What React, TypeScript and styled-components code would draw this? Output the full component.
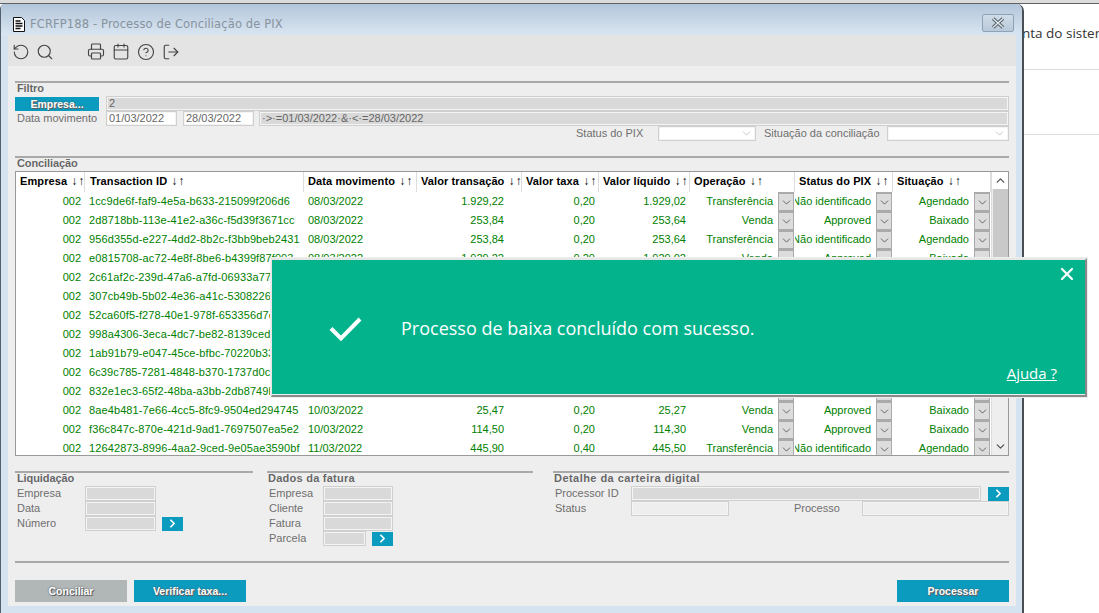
import React from "react";
import styled, { createGlobalStyle } from "styled-components";
import { RotateCcw, Search, Printer, Calendar, CircleHelp, LogOut, ChevronDown, ChevronUp, ChevronRight, X } from "lucide-react";

const Global = createGlobalStyle`
  html, body { margin: 0; padding: 0; background: #fff; }
  body { font-family: "Liberation Sans", Arial, sans-serif; font-size: 11px; overflow: hidden; }
  * { box-sizing: border-box; }
`;

const Page = styled.div`
  position: relative; width: 1099px; height: 613px; overflow: hidden; background: #fff;
  display: flex; flex-direction: column;
`;
const TopStrip = styled.div`height: 4px; background: #dcdcdc; border-bottom: 1px solid #5f6368; flex: none;`;
const Desk = styled.div`flex: 1; display: flex; min-height: 0;`;
const Win = styled.div`
  width: 1024px; flex: none; display: flex; flex-direction: column;
  border-left: 1px solid #55606c; border-right: 2px solid #4a4f55; border-top-right-radius: 7px; border-top-left-radius: 5px;
  background: #d5e3f1; padding: 0 6px 7px 7px;
`;
const TitleBar = styled.div`
  height: 31px; flex: none; margin: 0 -6px 0 -7px; padding: 9px 8px 0 11px; display: flex; align-items: center; gap: 4px;
  background: linear-gradient(#b3c6da, #d9e5f1); border-top-right-radius: 6px; border-top-left-radius: 4px;
`;
const TitleText = styled.span`font-family: "DejaVu Sans", sans-serif; font-size: 11.5px; color: #87939e; letter-spacing: .13px; flex: 1;`;
const CloseBtn = styled.div`
  width: 32px; height: 18px; margin-top: -2px; border: 1px solid #8fa3b8; border-radius: 2px; background: linear-gradient(#d0dce8,#b9c9d9);
  display: flex; align-items: center; justify-content: center;
`;
const Client = styled.div`flex: 1; display: flex; flex-direction: column; min-height: 0; background: #eeeeee;`;
const Toolbar = styled.div`height: 31px; flex: none; background: #e4e4e4; display: flex; align-items: center; padding: 2px 0 0 4px; color: #444;`;
const ToolIcon = styled.span<{ $gap?: number }>`display: flex; width: 18px; margin-right: ${p => p.$gap ?? 7}px; justify-content: center;`;
const Body = styled.div`flex: 1; padding: 15px 7px 0 7px; display: flex; flex-direction: column;`;

const SecTitle = styled.div<{ $ls?: number; $pl?: number }>`
  border-top: 2px solid #a9a9a9; height: 15px; padding: 0 0 0 ${p => p.$pl ?? 2}px; font-weight: bold; font-size: 11px; line-height: 11px; color: #666;
  text-shadow: 0 0 1px #fff; white-space: nowrap; letter-spacing: ${p => p.$ls ?? -0.1}px;
`;
const Row = styled.div`height: 15px; display: flex; align-items: center; flex: none;`;
const Label = styled.span<{ $w?: number; $ml?: number }>`
  color: #6e6e6e; font-size: 11px; line-height: 13px; white-space: nowrap; padding: 0 0 1px 2px; flex: none;
  width: ${p => (p.$w ? p.$w + "px" : "auto")}; margin-left: ${p => p.$ml ?? 0}px;
`;
const Field = styled.div<{ $w?: number; $ml?: number; $white?: boolean; $plain?: boolean }>`
  height: 15px; flex: ${p => (p.$w ? "none" : "1")}; width: ${p => (p.$w ? p.$w + "px" : "auto")}; margin-left: ${p => p.$ml ?? 0}px;
  border: 1px solid #cfcfcf; outline: 1px solid #f4f4f4; outline-offset: -2px;
  background: ${p => (p.$white ? "#fff" : p.$plain ? "#eeeeee" : "#d9d9d9")};
  color: #666; font-size: 11px; line-height: 13px; padding: 0 2px; white-space: nowrap; overflow: hidden;
  display: flex; align-items: center; justify-content: space-between;
`;
const ActionBtn = styled.button<{ $w: number; $grey?: boolean; $h?: number }>`
  width: ${p => p.$w}px; height: ${p => p.$h ?? 22}px; flex: none; border: 0; padding: 0; margin: 0;
  background: ${p => (p.$grey ? "#b1b6b6" : "#0b9bbf")}; color: #fff; font-family: inherit; font-size: 10.5px; font-weight: bold;
  text-shadow: 0 0 2px #555, 1px 1px 0 #666; text-align: center;
`;
const GoBtn = styled.div<{ $ml: number }>`
  width: 21px; height: 14px; margin-left: ${p => p.$ml}px; background: #0b9bbf; color: #fff; flex: none;
  display: flex; align-items: center; justify-content: center;
`;

const Spacer = styled.div<{ $h: number }>`height: ${p => p.$h}px; flex: none;`;

const Table = styled.div`height: 285px; flex: none; border: 1px solid #999; background: #fff; display: flex; overflow: hidden;`;
const TableMain = styled.div`flex: 1; min-width: 0;`;
const cols = "69px 219px 113px 105px 77px 91px 105px 98px 98px";
const HeadRow = styled.div`display: grid; grid-template-columns: ${cols}; height: 20px;`;
const HeadCell = styled.div<{ $pl?: number }>`
  font-weight: bold; color: #000; font-size: 11px; line-height: 19px; padding-left: ${p => p.$pl ?? 3}px; white-space: nowrap;
  border-right: 1px solid #ddd; overflow: hidden; letter-spacing: .1px;
`;
const Arrows = styled.span`font-size: 12px; letter-spacing: 1px; margin-left: 1px;`;
const DataRow = styled.div`display: grid; grid-template-columns: ${cols}; height: 19px;`;
const Cell = styled.div<{ $right?: number; $left?: number; $id?: boolean }>`
  color: #008000; font-size: 11px; line-height: 19px; white-space: nowrap; overflow: hidden;
  text-align: ${p => (p.$left !== undefined ? "left" : "right")};
  padding-left: ${p => p.$left ?? 0}px; padding-right: ${p => p.$right ?? 4}px;
  letter-spacing: ${p => (p.$id ? ".11px" : "0")};
`;
const SelCell = styled.div`display: flex; justify-content: flex-end; align-items: center; color: #008000; font-size: 11px; line-height: 19px; white-space: nowrap; padding-right: 1px; overflow: hidden;`;
const SelBtn = styled.span`
  width: 16px; height: 19px; flex: none; margin-left: 5px; background: #dcdcdc; border: 1px solid #aaa; border-top: 2px solid #aaa;
  display: flex; align-items: center; justify-content: center; color: #555;
`;
const Scroll = styled.div`width: 17px; flex: none; background: #eeeeee; display: flex; flex-direction: column; align-items: center; color: #555; border-left: 1px solid #ddd;`;
const ScrollEnd = styled.div`height: 17px; width: 100%; background: #fff; display: flex; align-items: center; justify-content: center; flex: none;`;
const ScrollEndLow = styled(ScrollEnd)`background: #eeeeee; margin-top: auto;`;
const Thumb = styled.div`height: 150px; width: 15px; background: #c9c9c9; flex: none;`;

const Lower = styled.div`display: grid; grid-template-columns: 238px 266px 462px; column-gap: 14px; flex: none;`;
const LowerThird = styled.div`padding-left: 6px;`;
const Rule = styled.div`border-top: 2px solid #a9a9a9; flex: none;`;
const Footer = styled.div`display: flex; gap: 7px; flex: none;`;
const Push = styled.div`flex: 1;`;

const Side = styled.div`flex: 1; min-width: 0; display: flex; flex-direction: column; overflow: hidden;`;
const SideTop = styled.div`height: 66px; flex: none; padding-top: 20px; border-bottom: 1px solid #dcdcdc; font-family: "Open Sans", sans-serif; font-size: 13.5px; color: #333; white-space: nowrap; margin-left: -2px;`;
const SideMid = styled.div`height: 65px; flex: none; border-bottom: 1px solid #dcdcdc;`;

const Toast = styled.div`
  position: absolute; left: 271px; top: 258px; width: 816px; height: 139px; background: #03b38c;
  border: 2px solid #e6e6e6; border-left-width: 1px; border-bottom: 2px solid #8a8a8a; border-right: 2px solid #8a8a8a; outline: 1px solid #eee; outline-offset: 0;
  box-shadow: inset 0 -1px 0 #eee; color: #fff;
`;
const ToastInner = styled.div`display: flex; align-items: center; height: 100%; padding: 0 0 0 56px;`;
const ToastMsg = styled.div`font-family: "Open Sans", sans-serif; font-size: 18px; margin-left: 37px;`;
const ToastClose = styled.div`position: absolute; right: 8px; top: 4px; display: flex;`;
const ToastHelp = styled.a`position: absolute; right: 28px; bottom: 12px; font-family: "Open Sans", sans-serif; font-size: 15px; color: #fff; text-decoration: underline;`;

type R = [string, string, string, string, string, number];
const rows: R[] = [
  ["1cc9de6f-faf9-4e5a-b633-215099f206d6", "08/03/2022", "1.929,22", "0,20", "1.929,02", 0],
  ["2d8718bb-113e-41e2-a36c-f5d39f3671cc", "08/03/2022", "253,84", "0,20", "253,64", 1],
  ["956d355d-e227-4dd2-8b2c-f3bb9beb2431", "08/03/2022", "253,84", "0,20", "253,64", 0],
  ["e0815708-ac72-4e8f-8be6-b4399f87f003", "08/03/2022", "1.929,22", "0,20", "1.929,02", 1],
  ["2c61af2c-239d-47a6-a7fd-06933a77b1e4", "08/03/2022", "253,84", "0,20", "253,64", 1],
  ["307cb49b-5b02-4e36-a41c-53082260c7a1", "09/03/2022", "253,84", "0,20", "253,64", 1],
  ["52ca60f5-f278-40e1-978f-653356d7e0b2", "09/03/2022", "253,84", "0,20", "253,64", 1],
  ["998a4306-3eca-4dc7-be82-8139ced8a6f3", "09/03/2022", "25,47", "0,20", "25,27", 1],
  ["1ab91b79-e047-45ce-bfbc-70220b33d9c5", "09/03/2022", "25,47", "0,20", "25,27", 1],
  ["6c39c785-7281-4848-b370-1737d0c1e2f4", "10/03/2022", "25,47", "0,20", "25,27", 1],
  ["832e1ec3-65f2-48ba-a3bb-2db8749b5a06", "10/03/2022", "25,47", "0,20", "25,27", 1],
  ["8ae4b481-7e66-4cc5-8fc9-9504ed294745", "10/03/2022", "25,47", "0,20", "25,27", 1],
  ["f36c847c-870e-421d-9ad1-7697507ea5e2", "10/03/2022", "114,50", "0,20", "114,30", 1],
  ["12642873-8996-4aa2-9ced-9e05ae3590bf", "11/03/2022", "445,90", "0,40", "445,50", 0],
];

const Sel = ({ t }: { t: string }) => (
  <SelCell>
    {t}
    <SelBtn><ChevronDown size={13} strokeWidth={1.6} /></SelBtn>
  </SelCell>
);

const Go = ({ ml }: { ml: number }) => (
  <GoBtn $ml={ml}><ChevronRight size={13} strokeWidth={3.2} /></GoBtn>
);

const DocIcon = () => (
  <svg width="14" height="17" viewBox="0 0 14 17">
    <path d="M1.5 1.5h8l3 3v11h-11z" fill="#fff" stroke="#111" />
    <path d="M3.5 5h5M3.5 7.5h7M3.5 10h7M3.5 12.5h5" stroke="#111" strokeWidth="1.4" />
  </svg>
);

const CloseGlyph = () => (
  <svg width="14" height="12" viewBox="0 0 14 12">
    <path d="M2 1.5l10 9M12 1.5l-10 9" stroke="#59646e" strokeWidth="3.6" />
    <path d="M2 1.5l10 9M12 1.5l-10 9" stroke="#dfe7ef" strokeWidth="1.4" />
  </svg>
);

const heads: [string, number][] = [
  ["Empresa", 4], ["Transaction ID", 5], ["Data movimento", 4], ["Valor transação", 4], ["Valor taxa", 4],
  ["Valor líquido", 4], ["Operação", 4], ["Status do PIX", 4], ["Situação", 4],
];

export default function App() {
  return (
    <Page>
      <Global />
      <TopStrip />
      <Desk>
        <Win>
          <TitleBar>
            <DocIcon />
            <TitleText>FCRFP188 - Processo de Conciliação de PIX</TitleText>
            <CloseBtn><CloseGlyph /></CloseBtn>
          </TitleBar>
          <Client>
            <Toolbar>
              <ToolIcon $gap={6}><RotateCcw size={18} strokeWidth={1.5} /></ToolIcon>
              <ToolIcon $gap={33}><Search size={18} strokeWidth={1.5} /></ToolIcon>
              <ToolIcon $gap={7}><Printer size={19} strokeWidth={1.5} /></ToolIcon>
              <ToolIcon $gap={7}><Calendar size={19} strokeWidth={1.5} /></ToolIcon>
              <ToolIcon $gap={7}><CircleHelp size={18} strokeWidth={1.5} /></ToolIcon>
              <ToolIcon><LogOut size={18} strokeWidth={1.5} /></ToolIcon>
            </Toolbar>
            <Body>
              <SecTitle>Filtro</SecTitle>
              <Row>
                <ActionBtn $w={84} $h={14}>Empresa...</ActionBtn>
                <Field $ml={7}>2</Field>
              </Row>
              <Row>
                <Label $w={91}>Data movimento</Label>
                <Field $w={71} $white>01/03/2022</Field>
                <Field $w={71} $ml={6} $white>28/03/2022</Field>
                <Field $ml={5}>·&gt;·=01/03/2022·&amp;·&lt;·=28/03/2022</Field>
              </Row>
              <Row>
                <Label $ml={559} $w={84}>Status do PIX</Label>
                <Field $w={98} $white><span /><ChevronDown size={13} strokeWidth={1.2} color="#aaa" /></Field>
                <Label $ml={6} $w={125}>Situação da conciliação</Label>
                <Field $white><span /><ChevronDown size={13} strokeWidth={1.2} color="#aaa" /></Field>
              </Row>
              <Spacer $h={15} />
              <SecTitle>Conciliação</SecTitle>
              <Table>
                <TableMain>
                  <HeadRow>
                    {heads.map(([h, pl]) => <HeadCell key={h} $pl={pl}>{h} <Arrows>↓↑</Arrows></HeadCell>)}
                  </HeadRow>
                  {rows.map(r => (
                    <DataRow key={r[0]}>
                      <Cell>002</Cell>
                      <Cell $left={4} $right={0} $id>{r[0]}</Cell>
                      <Cell $left={4} $right={0}>{r[1]}</Cell>
                      <Cell $right={18}>{r[2]}</Cell>
                      <Cell>{r[3]}</Cell>
                      <Cell>{r[4]}</Cell>
                      <Sel t={r[5] ? "Venda" : "Transferência"} />
                      <Sel t={r[5] ? "Approved" : "Não identificado"} />
                      <Sel t={r[5] ? "Baixado" : "Agendado"} />
                    </DataRow>
                  ))}
                </TableMain>
                <Scroll>
                  <ScrollEnd><ChevronUp size={13} strokeWidth={2.4} /></ScrollEnd>
                  <Thumb />
                  <ScrollEndLow><ChevronDown size={13} strokeWidth={2.4} /></ScrollEndLow>
                </Scroll>
              </Table>
              <Spacer $h={15} />
              <Lower>
                <div>
                  <SecTitle>Liquidação</SecTitle>
                  <Row><Label $w={70}>Empresa</Label><Field $w={71} /></Row>
                  <Row><Label $w={70}>Data</Label><Field $w={71} /></Row>
                  <Row><Label $w={70}>Número</Label><Field $w={71} /><Go ml={6} /></Row>
                </div>
                <div>
                  <SecTitle $ls={0.25} $pl={1}>Dados da fatura</SecTitle>
                  <Row><Label $w={56}>Empresa</Label><Field $w={70} /></Row>
                  <Row><Label $w={56}>Cliente</Label><Field $w={70} /></Row>
                  <Row><Label $w={56}>Fatura</Label><Field $w={70} /></Row>
                  <Row><Label $w={56}>Parcela</Label><Field $w={43} /><Go ml={6} /></Row>
                </div>
                <LowerThird>
                  <SecTitle $ls={0.45} $pl={1}>Detalhe da carteira digital</SecTitle>
                  <Row><Label $w={78}>Processor ID</Label><Field $w={350} /><Go ml={7} /></Row>
                  <Row>
                    <Label $w={78}>Status</Label><Field $w={98} $plain />
                    <Label $ml={63} $w={70}>Processo</Label><Field $plain />
                  </Row>
                </LowerThird>
              </Lower>
              <Spacer $h={15} />
              <Rule />
              <Spacer $h={17} />
              <Footer>
                <ActionBtn $w={112} $grey>Conciliar</ActionBtn>
                <ActionBtn $w={112}>Verificar taxa...</ActionBtn>
                <Push />
                <ActionBtn $w={112}>Processar</ActionBtn>
              </Footer>
            </Body>
          </Client>
        </Win>
        <Side>
          <SideTop>nta do sistema</SideTop>
          <SideMid />
        </Side>
      </Desk>
      <Toast>
        <ToastInner>
          <svg width="36" height="28" viewBox="0 0 36 28"><path d="M3 14.5l10 10L32 5" fill="none" stroke="#fff" strokeWidth="4" /></svg>
          <ToastMsg>Processo de baixa concluído com sucesso.</ToastMsg>
        </ToastInner>
        <ToastClose><X size={20} strokeWidth={2.6} /></ToastClose>
        <ToastHelp>Ajuda ?</ToastHelp>
      </Toast>
    </Page>
  );
}
